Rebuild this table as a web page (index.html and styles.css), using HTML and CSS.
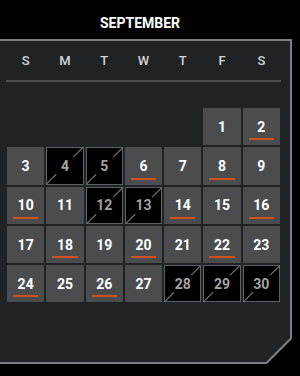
FILE: index.html
```html
<!DOCTYPE html>
<html>
<head>
<meta charset="utf-8">
<link rel="stylesheet" href="styles.css">
</head>
<body>
<div class="page">
  <h1 class="title">SEPTEMBER</h1>
  <div class="frame">
    <div class="panel">
      <div class="weekdays">
        <span>S</span><span>M</span><span>T</span><span>W</span><span>T</span><span>F</span><span>S</span>
      </div>
      <div class="divider"></div>
      <div class="grid">
        <div class="empty"></div><div class="empty"></div><div class="empty"></div><div class="empty"></div><div class="empty"></div>
        <div class="day">1</div>
        <div class="day mark">2</div>

        <div class="day">3</div>
        <div class="day off"><svg class="slash" viewBox="0 0 37 37" preserveAspectRatio="none"><line x1="0" y1="37" x2="10" y2="27"/><line x1="27" y1="10" x2="37" y2="0"/></svg><span>4</span></div>
        <div class="day off"><svg class="slash" viewBox="0 0 37 37" preserveAspectRatio="none"><line x1="0" y1="37" x2="10" y2="27"/><line x1="27" y1="10" x2="37" y2="0"/></svg><span>5</span></div>
        <div class="day mark">6</div>
        <div class="day">7</div>
        <div class="day mark">8</div>
        <div class="day">9</div>

        <div class="day mark">10</div>
        <div class="day">11</div>
        <div class="day off"><svg class="slash" viewBox="0 0 37 37" preserveAspectRatio="none"><line x1="0" y1="37" x2="10" y2="27"/><line x1="27" y1="10" x2="37" y2="0"/></svg><span>12</span></div>
        <div class="day off"><svg class="slash" viewBox="0 0 37 37" preserveAspectRatio="none"><line x1="0" y1="37" x2="10" y2="27"/><line x1="27" y1="10" x2="37" y2="0"/></svg><span>13</span></div>
        <div class="day mark">14</div>
        <div class="day">15</div>
        <div class="day mark">16</div>

        <div class="day">17</div>
        <div class="day mark">18</div>
        <div class="day">19</div>
        <div class="day mark">20</div>
        <div class="day">21</div>
        <div class="day mark">22</div>
        <div class="day">23</div>

        <div class="day mark">24</div>
        <div class="day">25</div>
        <div class="day mark">26</div>
        <div class="day">27</div>
        <div class="day off"><svg class="slash" viewBox="0 0 37 37" preserveAspectRatio="none"><line x1="0" y1="37" x2="10" y2="27"/><line x1="27" y1="10" x2="37" y2="0"/></svg><span>28</span></div>
        <div class="day off"><svg class="slash" viewBox="0 0 37 37" preserveAspectRatio="none"><line x1="0" y1="37" x2="10" y2="27"/><line x1="27" y1="10" x2="37" y2="0"/></svg><span>29</span></div>
        <div class="day off"><svg class="slash" viewBox="0 0 37 37" preserveAspectRatio="none"><line x1="0" y1="37" x2="10" y2="27"/><line x1="27" y1="10" x2="37" y2="0"/></svg><span>30</span></div>
      </div>
    </div>
  </div>
</div>
</body>
</html>
```

FILE: styles.css
```css
html, body {
  margin: 0;
  padding: 0;
  background: #000;
}

body {
  font-family: Roboto, "Liberation Sans", sans-serif;
  color: #fff;
  width: 300px;
  height: 376px;
  overflow: hidden;
}

.page {
  display: flex;
  flex-direction: column;
}

.title {
  margin: 15px 0 0 0;
  padding-right: 20px;
  font-size: 14px;
  line-height: 16px;
  font-weight: 700;
  text-align: center;
  letter-spacing: 0;
}

.frame {
  margin-top: 8px;
  margin-left: -10px;
  width: 302px;
  height: 325px;
  padding: 2px;
  box-sizing: border-box;
  background: #7c7e80;
  clip-path: polygon(0 0, 100% 0, 100% calc(100% - 25px), calc(100% - 25px) 100%, 0 100%);
}

.panel {
  height: 100%;
  box-sizing: border-box;
  background: #202326;
  padding: 13px 0 0 15px;
  clip-path: polygon(0 0, 100% 0, 100% calc(100% - 24px), calc(100% - 24px) 100%, 0 100%);
}

.weekdays {
  width: 273px;
  display: grid;
  grid-template-columns: repeat(7, 1fr);
  column-gap: 2px;
  font-size: 13px;
  line-height: 14px;
  font-weight: 500;
  color: #d4d4d4;
  text-align: center;
}

.divider {
  margin: 12px 0 0 -1px;
  width: 275px;
  height: 2px;
  background: #4c4f52;
}

.grid {
  margin-top: 26px;
  width: 273px;
  display: grid;
  grid-template-columns: repeat(7, 1fr);
  grid-auto-rows: 37.3px;
  gap: 2px;
}

.day {
  position: relative;
  display: flex;
  align-items: center;
  justify-content: center;
  background: #4b4c4e;
  font-size: 14px;
  font-weight: 700;
  color: #fff;
}

.mark::after {
  content: "";
  position: absolute;
  left: 6px;
  right: 6px;
  bottom: 5px;
  height: 2px;
  background: #cf521c;
}

.off {
  background: #000;
  box-shadow: inset 0 0 0 1px #5e5f60;
  color: #a2a2a2;
}

.off span {
  position: relative;
}

.slash {
  position: absolute;
  left: 0;
  top: 0;
  width: 100%;
  height: 100%;
}

.slash line {
  stroke: #6e6f70;
  stroke-width: 1.2;
}
```
